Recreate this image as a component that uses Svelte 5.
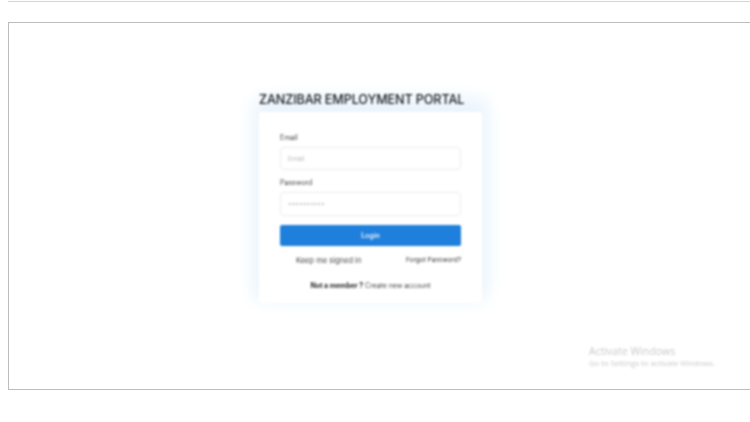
<script lang="ts">
  let email = "";
  let password = "";
</script>

<div class="page">
  <div class="topbar"></div>
  <div class="frame">
    <div class="login">
      <h1 class="title">ZANZIBAR EMPLOYMENT PORTAL</h1>
      <form class="card" on:submit|preventDefault>
        <label class="label" for="email">Email</label>
        <input id="email" class="input first" type="text" placeholder="Email" bind:value={email} />
        <label class="label second" for="password">Password</label>
        <input id="password" class="input" type="text" placeholder="••••••••••" bind:value={password} />
        <button class="submit" type="submit">Login</button>
        <div class="row">
          <span class="keep">Keep me signed in</span>
          <span class="forgot">Forgot Password?</span>
        </div>
        <p class="member"><b>Not a member ?</b> Create new account</p>
      </form>
    </div>
    <div class="watermark">
      <div class="wm-big">Activate Windows</div>
      <div class="wm-small">Go to Settings to activate Windows.</div>
    </div>
  </div>
</div>

<style>
  :global(body) {
    margin: 0;
    background: #fff;
    font-family: Inter, "Noto Sans", sans-serif;
  }
  .page {
    width: 750px;
    height: 422px;
    overflow: hidden;
    box-sizing: border-box;
    padding-left: 8px;
  }
  .topbar {
    height: 1px;
    border-bottom: 1px solid #d4d4d4;
    margin-bottom: 20px;
  }
  .frame {
    position: relative;
    box-sizing: border-box;
    height: 368px;
    border: 1px solid #bdbdbd;
    border-right: 0;
    background: #fff;
    padding: 67px 0 0 250px;
  }
  .login {
    width: 223px;
    filter: blur(0.8px);
  }
  .title {
    margin: 0 0 2px;
    height: 20px;
    font-size: 12.6px;
    line-height: 20px;
    font-weight: 500;
    color: #14181e;
    white-space: nowrap;
    letter-spacing: -0.1px;
  }
  .card {
    display: flex;
    flex-direction: column;
    box-sizing: border-box;
    height: 191px;
    padding: 21px 21px 0;
    background: #fff;
    border-radius: 3px;
    box-shadow: 0 -8px 18px 6px #e9f4fd;
  }
  .label {
    font-size: 7px;
    line-height: 10px;
    color: #444;
    margin-bottom: 4px;
  }
  .label.second {
    margin-top: 8px;
  }
  .input {
    box-sizing: border-box;
    width: 100%;
    height: 24px;
    padding: 0 7px;
    border: 1px solid #ececec;
    border-radius: 4px;
    outline: none;
    font: inherit;
    font-size: 6.5px;
    background: #fff;
  }
  .input.first {
    height: 23px;
  }
  .input::placeholder {
    color: #bcbcbc;
  }
  .submit {
    height: 21px;
    margin-top: 9px;
    border: 0;
    border-radius: 2px;
    background: #1f7fdc;
    color: #eaf4fd;
    font: inherit;
    font-size: 7px;
    font-weight: 600;
  }
  .row {
    display: flex;
    justify-content: space-between;
    align-items: center;
    margin-top: 8px;
    height: 12px;
  }
  .keep {
    margin-left: 16px;
    font-size: 7.5px;
    color: #444;
  }
  .forgot {
    font-size: 6.5px;
    color: #333;
  }
  .member {
    margin: 15px 0 0;
    text-align: center;
    font-size: 6.9px;
    line-height: 10px;
    color: #444;
  }
  .member b {
    font-weight: 700;
    color: #222;
  }
  .watermark {
    position: absolute;
    left: 580px;
    top: 321px;
    color: #c8c8c8;
    filter: blur(0.8px);
    font-family: "Open Sans", "Noto Sans", sans-serif;
    white-space: nowrap;
  }
  .wm-big {
    font-size: 10.5px;
    line-height: 14px;
  }
  .wm-small {
    font-size: 7.7px;
    line-height: 10px;
  }
</style>
